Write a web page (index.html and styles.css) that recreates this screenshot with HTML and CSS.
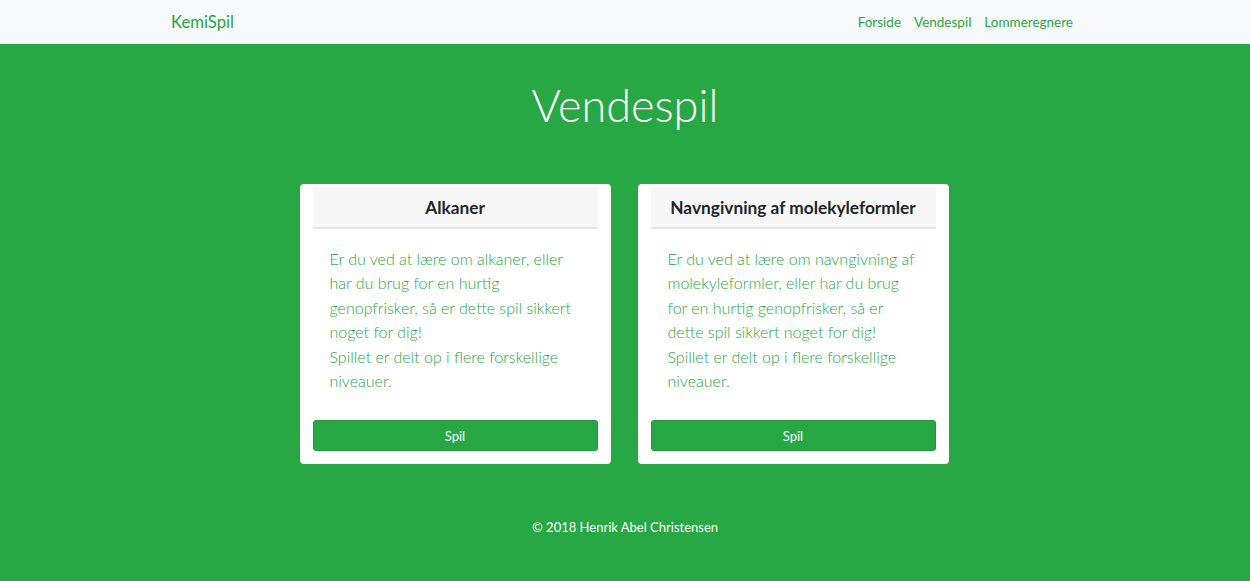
FILE: index.html
```html
<!DOCTYPE html>
<html lang="da">
<head>
<meta charset="utf-8">
<title>Vendespil</title>
<link rel="stylesheet" href="styles.css">
</head>
<body>
<nav class="navbar">
  <div class="nav-inner">
    <a class="brand" href="#">KemiSpil</a>
    <div class="links">
      <a href="#">Forside</a>
      <a href="#">Vendespil</a>
      <a href="#">Lommeregnere</a>
    </div>
  </div>
</nav>
<main class="main">
  <h1 class="title">Vendespil</h1>
  <div class="cards">
    <div class="card">
      <div class="card-header">Alkaner</div>
      <div class="card-body">Er du ved at lære om alkaner, eller har du brug for en hurtig genopfrisker, så er dette spil sikkert noget for dig!<br>Spillet er delt op i flere forskellige niveauer.</div>
      <button class="btn">Spil</button>
    </div>
    <div class="card">
      <div class="card-header">Navngivning af molekyleformler</div>
      <div class="card-body">Er du ved at lære om navngivning af molekyleformler, eller har du brug for en hurtig genopfrisker, så er dette spil sikkert noget for dig!<br>Spillet er delt op i flere forskellige niveauer.</div>
      <button class="btn">Spil</button>
    </div>
  </div>
  <footer class="footer">© 2018 Henrik Abel Christensen</footer>
</main>
</body>
</html>
```
FILE: styles.css
```css
* { box-sizing: border-box; }
html, body { margin: 0; padding: 0; }
body {
  background: #28a745;
  font-family: Lato, "Open Sans", sans-serif;
  height: 581px;
  overflow: hidden;
}
.navbar {
  height: 44px;
  background: #f8f9fa;
}
.nav-inner {
  width: 902px;
  margin: 0 auto;
  height: 100%;
  display: flex;
  align-items: center;
  justify-content: space-between;
  position: relative;
  left: -3px;
}
.brand {
  color: #28a745;
  text-decoration: none;
  font-size: 16.7px;
}
.links {
  display: flex;
  gap: 13px;
}
.links a {
  color: #28a745;
  text-decoration: none;
  font-size: 13.5px;
}
.main {
  display: flex;
  flex-direction: column;
  align-items: center;
}
.title {
  margin: 33px 0 0;
  color: #fff;
  font-weight: 300;
  font-size: 45px;
  line-height: 56px;
}
.cards {
  display: flex;
  gap: 27px;
  margin-top: 51px;
  position: relative;
  left: -1px;
}
.card {
  width: 311px;
  height: 280px;
  background: #fff;
  border-radius: 4px;
  padding: 3px 13px 13px;
  display: flex;
  flex-direction: column;
}
.card-header {
  height: 42px;
  background: #f7f7f7;
  border-bottom: 2px solid #e6e6e6;
  display: flex;
  align-items: center;
  justify-content: center;
  font-weight: 700;
  font-size: 17.3px;
  color: #212529;
}
.card-body {
  flex: 1;
  padding: 18px 14px 0 17px;
  color: #28a745;
  font-weight: 300;
  font-size: 16px;
  line-height: 24.4px;
}
.btn {
  height: 31px;
  width: 100%;
  background: #28a745;
  border: 1px solid #23963e;
  border-radius: 3px;
  color: #fff;
  font-family: inherit;
  font-size: 13px;
  padding: 0;
}
.footer {
  margin-top: 55px;
  color: #fff;
  font-size: 13px;
  line-height: 16px;
}
```
